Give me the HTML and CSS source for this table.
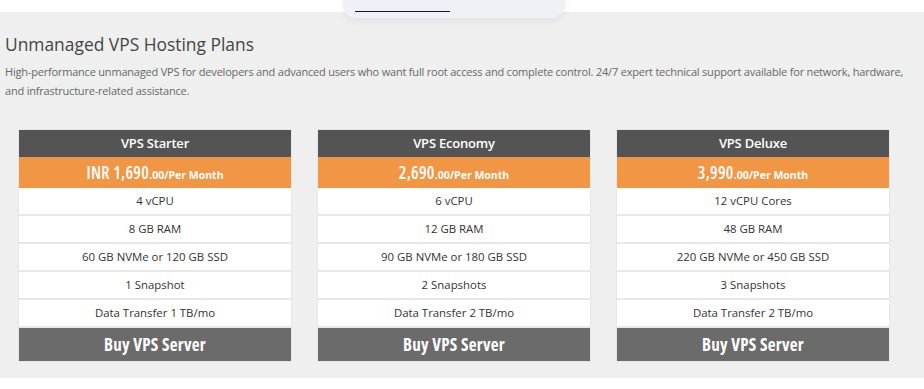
FILE: index.html
```html
<!DOCTYPE html>
<html lang="en">
<head>
<meta charset="utf-8">
<title>Unmanaged VPS Hosting Plans</title>
<link rel="stylesheet" href="styles.css">
</head>
<body>
<div class="topbar">
  <div class="pill"><span class="pill-line"></span></div>
</div>
<section class="plans">
  <h2 class="title">Unmanaged VPS Hosting Plans</h2>
  <p class="lead">High-performance unmanaged VPS for developers and advanced users who want full root access and complete control. 24/7 expert technical support available for network, hardware, and infrastructure-related assistance.</p>
  <div class="cards">
    <div class="card">
      <div class="card-head">VPS Starter</div>
      <div class="card-price"><span class="big">INR 1,690</span><span class="small">.00/Per Month</span></div>
      <div class="row">4 vCPU</div>
      <div class="row">8 GB RAM</div>
      <div class="row">60 GB NVMe or 120 GB SSD</div>
      <div class="row">1 Snapshot</div>
      <div class="row">Data Transfer 1 TB/mo</div>
      <div class="buy">Buy VPS Server</div>
    </div>
    <div class="card">
      <div class="card-head">VPS Economy</div>
      <div class="card-price"><span class="big">2,690</span><span class="small">.00/Per Month</span></div>
      <div class="row">6 vCPU</div>
      <div class="row">12 GB RAM</div>
      <div class="row">90 GB NVMe or 180 GB SSD</div>
      <div class="row">2 Snapshots</div>
      <div class="row">Data Transfer 2 TB/mo</div>
      <div class="buy">Buy VPS Server</div>
    </div>
    <div class="card">
      <div class="card-head">VPS Deluxe</div>
      <div class="card-price"><span class="big">3,990</span><span class="small">.00/Per Month</span></div>
      <div class="row">12 vCPU Cores</div>
      <div class="row">48 GB RAM</div>
      <div class="row">220 GB NVMe or 450 GB SSD</div>
      <div class="row">3 Snapshots</div>
      <div class="row">Data Transfer 2 TB/mo</div>
      <div class="buy">Buy VPS Server</div>
    </div>
  </div>
</section>
</body>
</html>
```
FILE: styles.css
```css
html, body {
  margin: 0;
  padding: 0;
  background: #ffffff;
  font-family: "Open Sans", "Liberation Sans", sans-serif;
}

.topbar {
  height: 12px;
  background: #ffffff;
  position: relative;
  z-index: 2;
}

.pill {
  position: absolute;
  left: 343px;
  top: -20px;
  width: 222px;
  height: 38px;
  background: #eef2f7;
  border-radius: 0 0 14px 14px;
  box-shadow: 0 3px 8px rgba(0, 0, 0, 0.06);
}

.pill-line {
  position: absolute;
  left: 12px;
  bottom: 6px;
  width: 95px;
  height: 1px;
  background: #111a33;
}

.plans {
  background: #efefef;
  padding: 20px 0 16px 5px;
}

.title {
  margin: 0;
  font-size: 17.4px;
  font-weight: 500;
  font-stretch: 90%;
  line-height: 24px;
  color: #454545;
}

.lead {
  margin: 6px 0 0;
  font-size: 11px;
  font-stretch: 90%;
  letter-spacing: -0.2px;
  line-height: 19px;
  color: #686868;
  max-width: 900px;
}

.cards {
  display: flex;
  gap: 25px;
  margin: 29px 0 0 13px;
}

.card {
  width: 272px;
  background: #fff;
  border: 1px solid #e6e6e6;
  text-align: center;
}

.card-head {
  height: 27px;
  line-height: 27px;
  background: #545454;
  color: #fff;
  font-weight: 600;
  font-size: 13px;
  font-stretch: 90%;
  letter-spacing: -0.2px;
}

.card-price {
  height: 31px;
  line-height: 31px;
  background: #f09645;
  color: #fff;
}

.card-price .big {
  font-size: 17px;
  font-weight: 600;
  font-stretch: 75%;
  letter-spacing: 0.3px;
}

.card-price .small {
  font-size: 10.5px;
  font-weight: 700;
  font-stretch: 90%;
}

.row {
  height: 26px;
  line-height: 26px;
  border-bottom: 2px solid #e8e8e8;
  font-size: 11.4px;
  font-stretch: 90%;
  color: #333;
}

.row:last-of-type {
  border-bottom: none;
}

.buy {
  height: 33px;
  line-height: 33px;
  background: #6b6b6b;
  color: #fff;
  font-weight: 700;
  font-size: 17px;
  font-stretch: 75%;
  letter-spacing: 0.3px;
}
```
